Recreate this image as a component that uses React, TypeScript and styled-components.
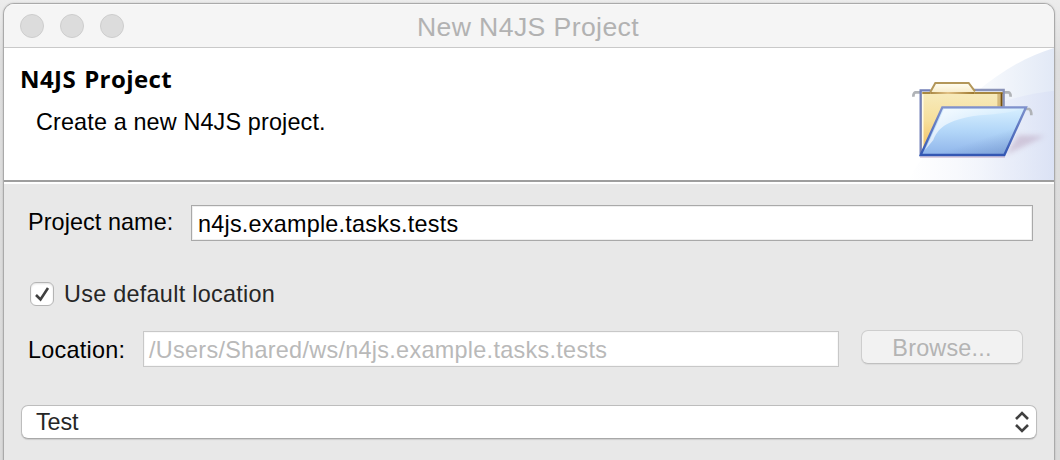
import React from 'react';
import styled, { createGlobalStyle } from 'styled-components';

const GlobalStyle = createGlobalStyle`
  * { box-sizing: border-box; }
  body {
    margin: 0;
    background: #e0e0e0;
    font-family: 'Liberation Sans', Arial, sans-serif;
    font-size: 23.4px;
    line-height: 26px;
    color: #000;
  }
`;

const Desktop = styled.div`
  height: 460px;
  overflow: hidden;
  padding: 3px 5px 0 3px;
  background: linear-gradient(#ececec 0, #dedede 60px, #dadada 100%);
`;

const Window = styled.main`
  height: 470px;
  border: 1px solid #aaa;
  border-radius: 11px 11px 0 0;
  overflow: hidden;
  background: #e8e8e8;
  box-shadow: 0 0 2px rgba(0, 0, 0, 0.2);
`;

const TitleBar = styled.header`
  height: 44px;
  display: grid;
  grid-template-columns: 200px 1fr 200px;
  align-items: center;
  background: #f5f5f5;
  border-bottom: 1px solid #c9c9c9;
  box-shadow: inset 0 1px #fafafa;
`;

const Lights = styled.div`
  display: flex;
  gap: 16px;
  padding: 0 0 0 16px;
`;

const Light = styled.span`
  width: 24px;
  height: 24px;
  border-radius: 50%;
  border: 1px solid #cdcdcd;
  background: #dcdcdc;
`;

const Text = styled.span<{ $spacing?: number; $color?: string }>`
  white-space: nowrap;
  letter-spacing: ${(p) => p.$spacing ?? 0}px;
  color: ${(p) => p.$color ?? '#000'};
`;

const WindowTitle = styled(Text)`
  font-size: 26.6px;
  line-height: 30px;
  text-align: center;
  padding: 2px 2px 0 0;
`;

const Banner = styled.section`
  height: 132px;
  display: flex;
  justify-content: space-between;
  background: #fff;
`;

const BannerText = styled.div`
  display: flex;
  flex-direction: column;
  padding: 14px 0 0 16px;
`;

const Heading = styled.h1`
  margin: 0;
  font: bold 24px/34px 'Open Sans', 'Noto Sans', sans-serif;
  letter-spacing: 0.4px;
  word-spacing: 1.5px;
`;

const Description = styled(Text)`
  padding: 13px 0 0 16px;
`;

const Divider = styled.div`
  height: 4px;
  background: #fff;
  border-top: 2px solid #9e9e9e;
`;

const Form = styled.form`
  padding: 21px 17px 0;
`;

const Row = styled.div<{ $top?: number; $height: number }>`
  display: flex;
  align-items: center;
  height: ${(p) => p.$height}px;
  margin-top: ${(p) => p.$top ?? 0}px;
  padding-left: 7px;
`;

const Label = styled.label<{ $width: number; $lift?: number }>`
  width: ${(p) => p.$width}px;
  flex: none;
  margin-top: ${(p) => -(p.$lift ?? 0)}px;
`;

const Field = styled.div<{ $width: number; $disabled?: boolean }>`
  width: ${(p) => p.$width}px;
  height: 36px;
  padding: 5px 0 0 ${(p) => (p.$disabled ? 5 : 6)}px;
  background: #fff;
  border: 1px solid ${(p) => (p.$disabled ? '#c8c8c8' : '#a9a9a9')};
  box-shadow: inset 0 0 0 1px ${(p) => (p.$disabled ? '#f8f8f8' : '#efefef')};
`;

const CheckBox = styled.span`
  width: 24px;
  height: 24px;
  margin: 0 10px 0 2px;
  border-radius: 6px;
  border: 1px solid #b4b4b4;
  background: #fff;
  box-shadow: inset 0 1px 2px rgba(0, 0, 0, 0.12);
  svg { display: block; }
`;

const BrowseButton = styled.button`
  width: 162px;
  height: 34px;
  margin: -4px 0 0 22px;
  padding: 1px 0 0;
  font: inherit;
  border: 1px solid #cecece;
  border-bottom-color: #c0c0c0;
  border-radius: 7px;
  background: #f2f2f2;
  box-shadow: 0 1px 1px rgba(0, 0, 0, 0.06);
`;

const Select = styled.div`
  height: 34px;
  margin-top: 38px;
  padding: 0 7px 0 14px;
  display: flex;
  align-items: center;
  justify-content: space-between;
  border: 1px solid #bdbdbd;
  border-bottom-color: #a8a8a8;
  border-radius: 7px;
  background: #fff;
  box-shadow: 0 1px 1px rgba(0, 0, 0, 0.12);
`;

const FolderArt = () => (
  <svg width="164" height="132" viewBox="0 24 492 396" aria-hidden="true">
    <defs>
      <linearGradient id="sky" gradientUnits="userSpaceOnUse" x1="200" y1="0" x2="492" y2="0">
        <stop offset="0" stopColor="#fff" />
        <stop offset=".35" stopColor="#f5f8fc" />
        <stop offset="1" stopColor="#e2e9f6" />
      </linearGradient>
      <linearGradient id="sky2" x1="0" x2="1">
        <stop offset="0" stopColor="#fff" />
        <stop offset=".5" stopColor="#f0f3fb" />
        <stop offset="1" stopColor="#d9e0f5" />
      </linearGradient>
      <linearGradient id="paper" x1="0" y1="0" x2="0" y2="1">
        <stop offset="0" stopColor="#f7ebbd" />
        <stop offset=".45" stopColor="#f6df9c" />
        <stop offset="1" stopColor="#f3b957" />
      </linearGradient>
      <linearGradient id="tab" x1="0" y1="0" x2="0" y2="1">
        <stop offset="0" stopColor="#fffdf2" />
        <stop offset="1" stopColor="#f8edcb" />
      </linearGradient>
      <linearGradient id="fold" x1="0" y1="0" x2="0" y2="1">
        <stop offset="0" stopColor="#d8f0ff" />
        <stop offset=".5" stopColor="#b2d6f8" />
        <stop offset="1" stopColor="#8fb4ea" />
      </linearGradient>
      <linearGradient id="edge" x1="0" y1="0" x2="0" y2="1">
        <stop offset="0" stopColor="#7f91cc" />
        <stop offset="1" stopColor="#3458b4" />
      </linearGradient>
      <linearGradient id="brown" x1="0" x2="1">
        <stop offset="0" stopColor="#9a742c" />
        <stop offset=".4" stopColor="#dcb878" />
        <stop offset="1" stopColor="#8a6010" />
      </linearGradient>
      <linearGradient id="shine" x1="0" y1="0" x2="1" y2=".3">
        <stop offset="0" stopColor="#fff" stopOpacity=".85" />
        <stop offset="1" stopColor="#fff" stopOpacity=".05" />
      </linearGradient>
      <linearGradient id="corner" x1=".55" y1=".4" x2="1" y2="1">
        <stop offset=".3" stopColor="#5f80b8" stopOpacity="0" />
        <stop offset="1" stopColor="#5f80b8" stopOpacity=".5" />
      </linearGradient>
      <filter id="soft" x="-30%" y="-50%" width="160%" height="200%">
        <feGaussianBlur stdDeviation="8" />
      </filter>
    </defs>
    <path d="M492 24 C410 48 330 95 255 160 C150 250 80 330 55 420 H492Z" fill="url(#sky)" />
    <path d="M492 152 C330 170 150 240 55 420 H492Z" fill="url(#sky2)" opacity=".75" />
    <path d="M345 346 L465 288 L385 285Z" fill="#b9a3bd" opacity=".5" filter="url(#soft)" />
    <path d="M90 350 H345" stroke="#c9b4cf" strokeWidth="8" opacity=".6" />
    <g fill="none" stroke="#b0b3b7" strokeWidth="8">
      <path d="M92 157 H76 Q70 159 70 170" />
      <path d="M340 157 H356 Q362 159 362 170" />
      <path d="M155 211 H140 Q133 214 133 226" />
      <path d="M405 207 H417 Q424 210 424 226" />
    </g>
    <path d="M92 156 H341 V210 L100 345 H92Z" fill="url(#paper)" />
    <path d="M98 163 V335" stroke="#fffbe8" strokeWidth="5" />
    <path d="M329 162 V200" stroke="#b58e45" strokeWidth="14" opacity=".5" />
    <path d="M335 158 V200" stroke="#76510e" strokeWidth="6" />
    <path d="M252 150 H341 V200" fill="none" stroke="#8a93b8" strokeWidth="7" />
    <path d="M122 151 H92 V344" fill="none" stroke="#7380b8" strokeWidth="7" />
    <path d="M121 158 L136 129 H236 L256 158Z" fill="url(#tab)" />
    <path d="M121 156 L136 129 H236 L255 154" fill="none" stroke="#b3975a" strokeWidth="6" />
    <path d="M97 159 H121 M253 159 H338" stroke="#8f6818" strokeWidth="5" />
    <rect x="121" y="156.500" width="132" height="5" fill="url(#brown)" />
    <path d="M157 202 H408 L343 345 H92Z" fill="url(#fold)" />
    <path d="M157 202 H408 L343 345 H92Z" fill="url(#corner)" />
    <path d="M162 207 H390 Q372 218 270 226 C165 238 142 270 130 300 L105 330Z" fill="url(#shine)" />
    <path d="M157 202 H408 L343 345 H92Z" fill="none" stroke="url(#edge)" strokeWidth="7" />
    <path d="M94 345 H343" stroke="#3457b3" strokeWidth="6" />
  </svg>
);

export default function App() {
  return (
    <Desktop>
      <GlobalStyle />
      <Window>
        <TitleBar>
          <Lights>
            <Light />
            <Light />
            <Light />
          </Lights>
          <WindowTitle $color="#b2b2b2" $spacing={0.4}>New N4JS Project</WindowTitle>
        </TitleBar>
        <Banner>
          <BannerText>
            <Heading>N4JS Project</Heading>
            <Description $spacing={0.14}>Create a new N4JS project.</Description>
          </BannerText>
          <FolderArt />
        </Banner>
        <Divider />
        <Form>
          <Row $height={36}>
            <Label $width={163} $lift={2}><Text $spacing={0.08}>Project name:</Text></Label>
            <Field $width={842}><Text $spacing={0.23}>n4js.example.tasks.tests</Text></Field>
          </Row>
          <Row $top={41} $height={24}>
            <CheckBox>
              <svg width="22" height="22" viewBox="0 0 22 22">
                <path d="M5 12 L9.500 16.500 L17 5" fill="none" stroke="#404040" strokeWidth="2.600" />
              </svg>
            </CheckBox>
            <Text $color="#262626" $spacing={0.28}>Use default location</Text>
          </Row>
          <Row $top={25} $height={36}>
            <Label $width={115} $lift={-2}><Text $spacing={0.25}>Location:</Text></Label>
            <Field $width={696} $disabled>
              <Text $color="#b9b9b9" $spacing={0.3}>/Users/Shared/ws/n4js.example.tasks.tests</Text>
            </Field>
            <BrowseButton type="button" disabled>
              <Text $color="#b4b4b4" $spacing={0.2}>Browse...</Text>
            </BrowseButton>
          </Row>
          <Select>
            <Text $color="#262626" $spacing={-0.1}>Test</Text>
            <svg width="14" height="22" viewBox="0 0 14 22">
              <path d="M1 8 L7 2 L13 8 M1 14 L7 20 L13 14" fill="none" stroke="#404040" strokeWidth="2.600" />
            </svg>
          </Select>
        </Form>
      </Window>
    </Desktop>
  );
}
